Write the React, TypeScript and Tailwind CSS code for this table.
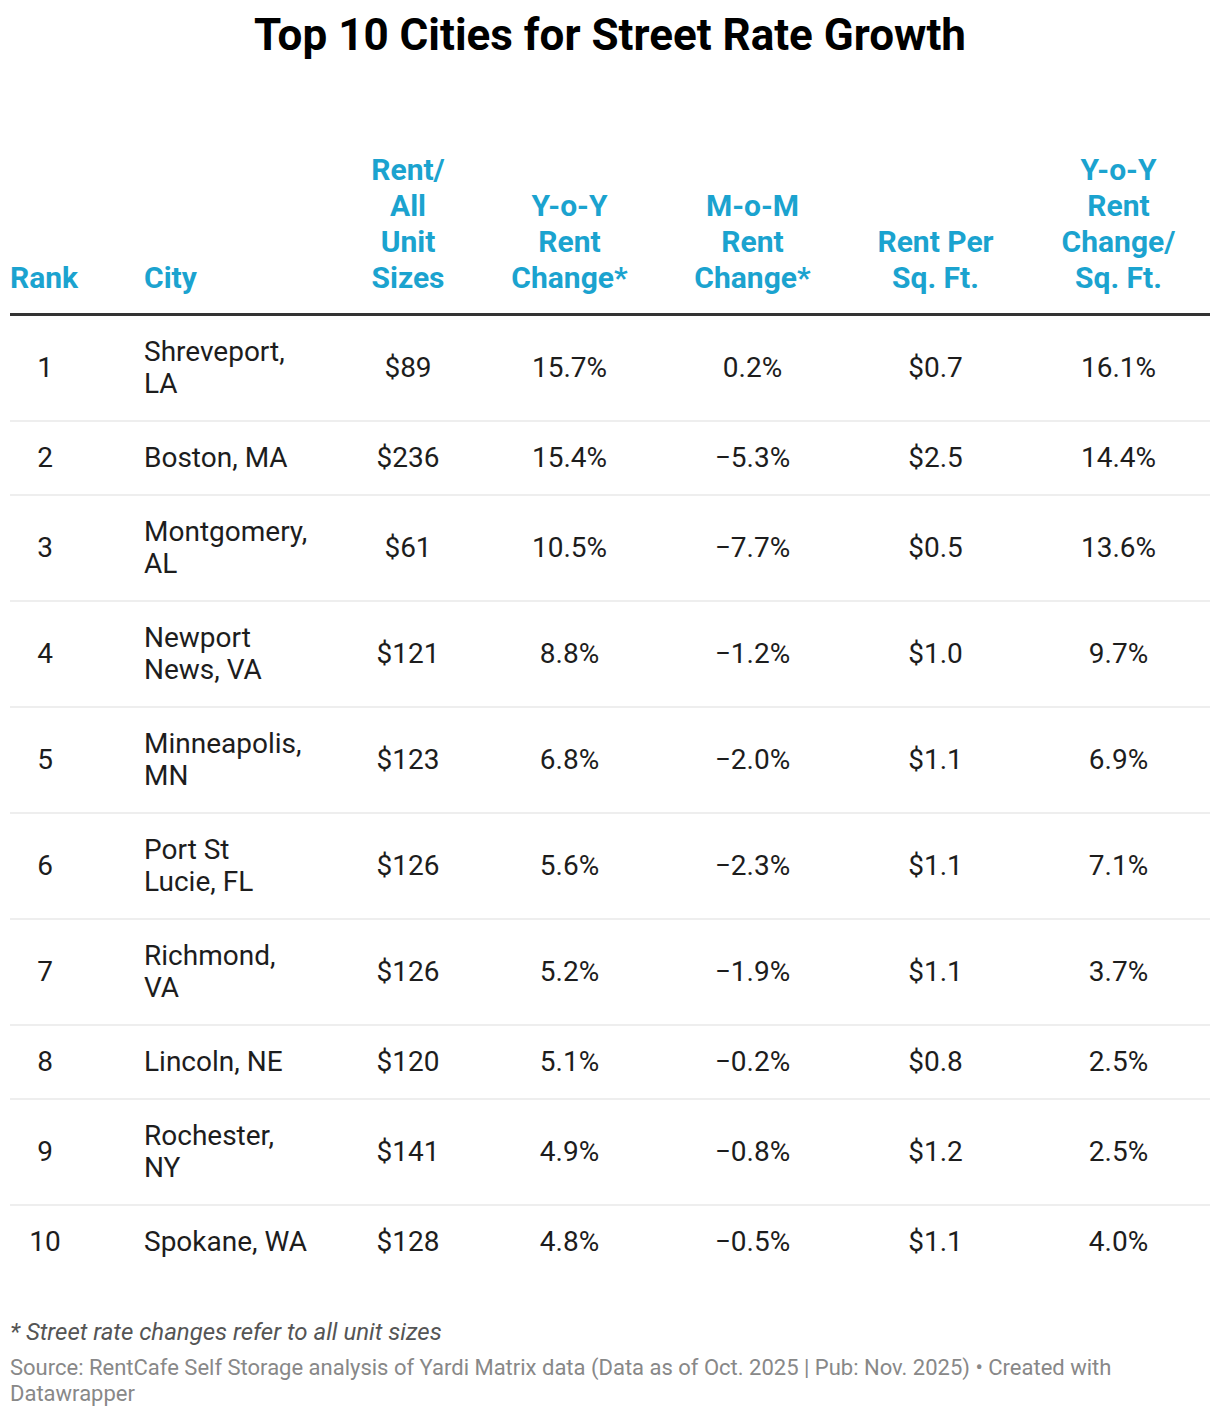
const rows = [
  { rank: "1", city: ["Shreveport,", "LA"], rent: "$89", yoy: "15.7%", mom: "0.2%", sqft: "$0.7", yoySq: "16.1%" },
  { rank: "2", city: ["Boston, MA"], rent: "$236", yoy: "15.4%", mom: "−5.3%", sqft: "$2.5", yoySq: "14.4%" },
  { rank: "3", city: ["Montgomery,", "AL"], rent: "$61", yoy: "10.5%", mom: "−7.7%", sqft: "$0.5", yoySq: "13.6%" },
  { rank: "4", city: ["Newport", "News, VA"], rent: "$121", yoy: "8.8%", mom: "−1.2%", sqft: "$1.0", yoySq: "9.7%" },
  { rank: "5", city: ["Minneapolis,", "MN"], rent: "$123", yoy: "6.8%", mom: "−2.0%", sqft: "$1.1", yoySq: "6.9%" },
  { rank: "6", city: ["Port St", "Lucie, FL"], rent: "$126", yoy: "5.6%", mom: "−2.3%", sqft: "$1.1", yoySq: "7.1%" },
  { rank: "7", city: ["Richmond,", "VA"], rent: "$126", yoy: "5.2%", mom: "−1.9%", sqft: "$1.1", yoySq: "3.7%" },
  { rank: "8", city: ["Lincoln, NE"], rent: "$120", yoy: "5.1%", mom: "−0.2%", sqft: "$0.8", yoySq: "2.5%" },
  { rank: "9", city: ["Rochester,", "NY"], rent: "$141", yoy: "4.9%", mom: "−0.8%", sqft: "$1.2", yoySq: "2.5%" },
  { rank: "10", city: ["Spokane, WA"], rent: "$128", yoy: "4.8%", mom: "−0.5%", sqft: "$1.1", yoySq: "4.0%" },
];

const headers: { lines: string[]; align: "left" | "center" }[] = [
  { lines: ["Rank"], align: "left" },
  { lines: ["City"], align: "left" },
  { lines: ["Rent/", "All", "Unit", "Sizes"], align: "center" },
  { lines: ["Y-o-Y", "Rent", "Change*"], align: "center" },
  { lines: ["M-o-M", "Rent", "Change*"], align: "center" },
  { lines: ["Rent Per", "Sq. Ft."], align: "center" },
  { lines: ["Y-o-Y", "Rent", "Change/", "Sq. Ft."], align: "center" },
];

const GRID = "grid grid-cols-[70px_258px_140px_183px_183px_183px_183px]";

export default function App() {
  return (
    <div className="w-[1220px] bg-white px-[10px] pt-[10px] pb-[10px] font-['Roboto',sans-serif]">
      <h1 className="text-center text-[44px] leading-[50px] font-bold text-black">
        Top 10 Cities for Street Rate Growth
      </h1>

      <div className="mt-[92px]">
        {/* header */}
        <div className={`${GRID} items-end border-b-[3px] border-[#333333] pb-[17px]`}>
          {headers.map((h, i) => (
            <div
              key={i}
              className={`text-[30px] leading-[36px] font-bold text-[#1ba3cf] ${
                h.align === "center" ? "text-center" : "text-left"
              } ${i === 1 ? "pl-[64px]" : ""}`}
            >
              {h.lines.map((l) => (
                <div key={l}>{l}</div>
              ))}
            </div>
          ))}
        </div>

        {/* rows */}
        {rows.map((r, idx) => (
          <div
            key={r.rank}
            className={`${GRID} items-center py-[20px] text-[28px] leading-[32px] text-[#1d1d1d] ${
              idx < rows.length - 1 ? "border-b-2 border-[#eeeeee]" : ""
            }`}
          >
            <div className="text-center">{r.rank}</div>
            <div className="pl-[64px]">
              {r.city.map((c) => (
                <div key={c}>{c}</div>
              ))}
            </div>
            <div className="text-center">{r.rent}</div>
            <div className="text-center">{r.yoy}</div>
            <div className="text-center">{r.mom}</div>
            <div className="text-center">{r.sqft}</div>
            <div className="text-center">{r.yoySq}</div>
          </div>
        ))}
      </div>

      <div className="mt-[39px]">
        <p className="text-[24px] leading-[30px] italic text-[#555555]">
          * Street rate changes refer to all unit sizes
        </p>
        <p className="mt-[8px] text-[22px] leading-[26px] text-[#888888]">
          Source: RentCafe Self Storage analysis of Yardi Matrix data (Data as of Oct. 2025 | Pub: Nov. 2025) • Created with
          <br />
          Datawrapper
        </p>
      </div>
    </div>
  );
}
